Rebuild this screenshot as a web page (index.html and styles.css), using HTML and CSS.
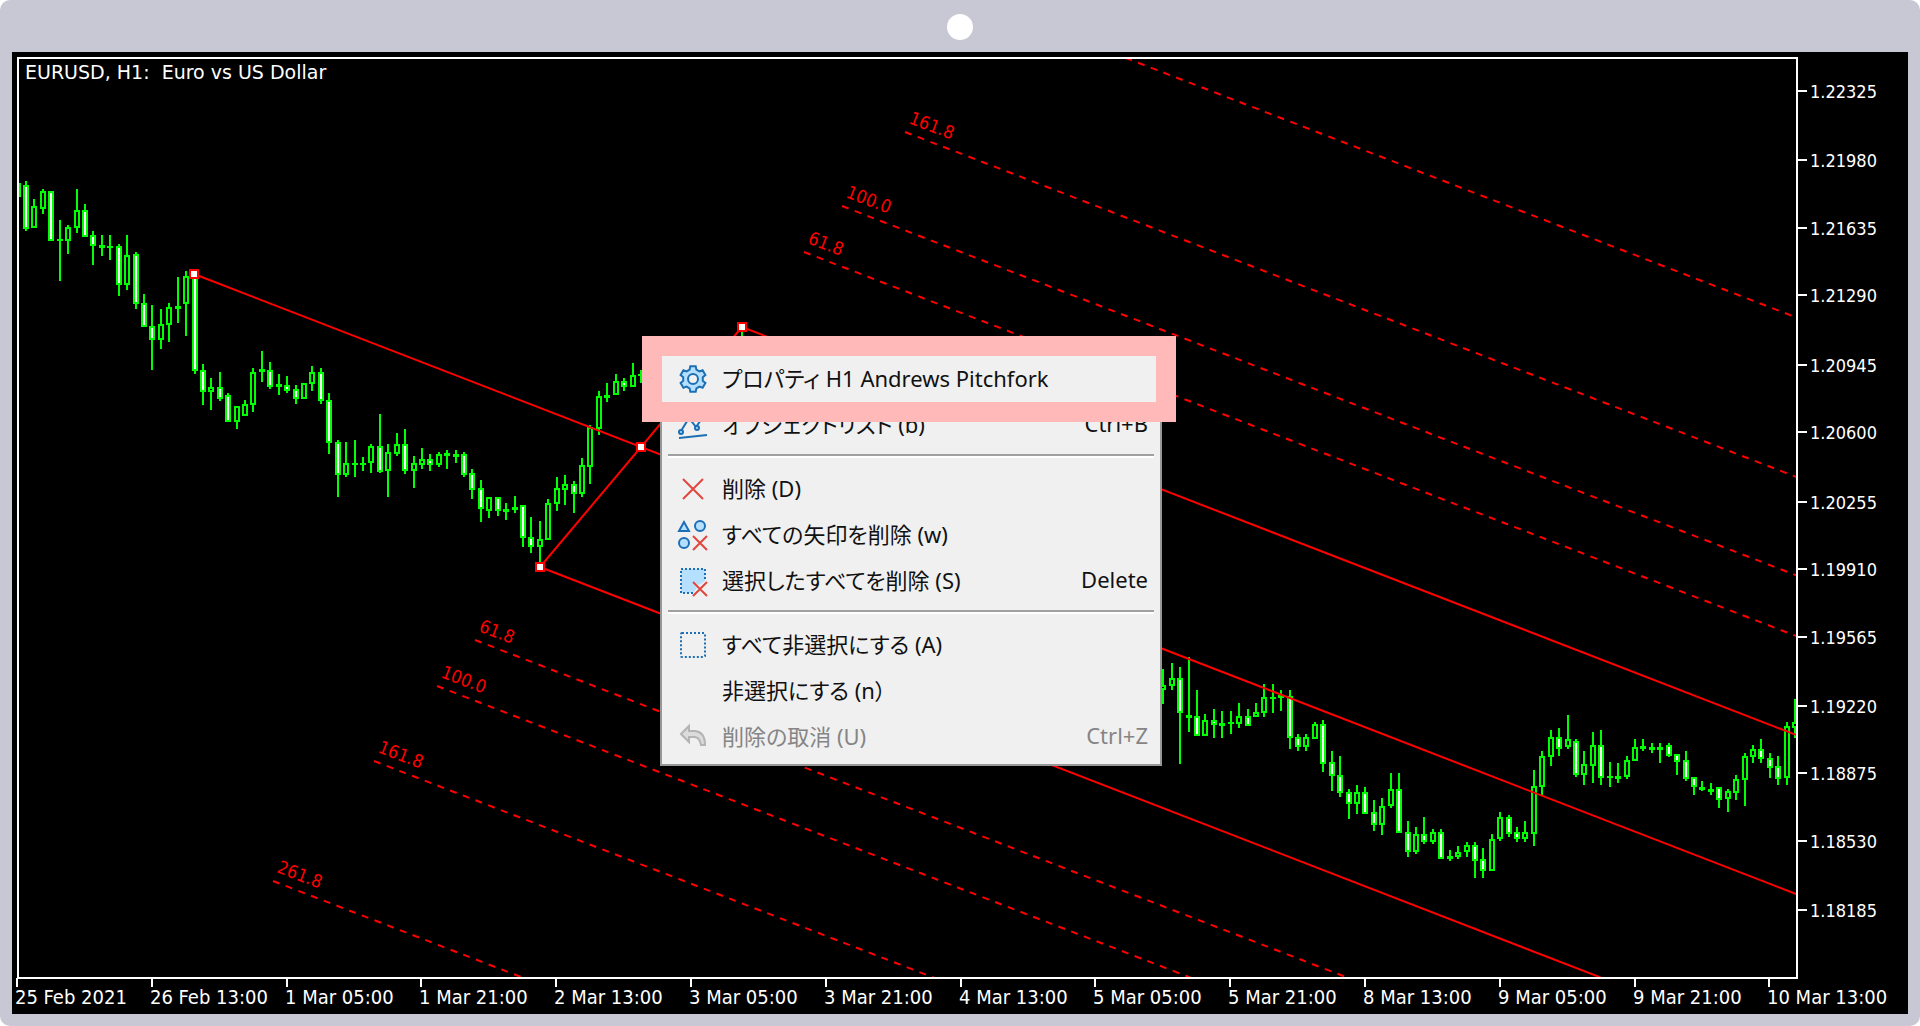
FILE: index.html
```
<!DOCTYPE html>
<html lang="ja">
<head>
<meta charset="utf-8">
<meta name="viewport" content="width=device-width, initial-scale=1">
<title>EURUSD, H1</title>
<link rel="stylesheet" href="styles.css">
</head>
<body>
<main class="device">
  <header class="device-bar"><span class="camera"></span></header>
  <section class="screen">
    <svg class="chart" viewBox="12 52 1896 962" role="img" aria-label="EURUSD, H1: Euro vs US Dollar">
      <defs>
        <clipPath id="plot"><rect x="18" y="58" width="1779" height="919"/></clipPath>
      </defs>
      <g clip-path="url(#plot)">
        <path id="wicks" class="candle"/>
        <path id="hollow" class="candle candle-up"/>
        <path id="filled" class="candle candle-down"/>
        <g id="solid" class="pitch"></g>
        <g id="dashed" class="pitch pitch-level"></g>
        <g id="levels" class="level-label"></g>
        <g id="handles" class="handle"></g>
      </g>
      <rect class="frame" x="18" y="58" width="1779" height="920"/>
      <path id="ticks" class="frame"/>
      <text class="chart-title" x="25" y="79" xml:space="preserve">EURUSD, H1:  Euro vs US Dollar</text>
      <g id="prices" class="price-label"></g>
      <g id="times" class="time-label"></g>
    </svg>

    <ul class="menu" role="menu">
      <li class="marked"><button class="item" type="button" role="menuitem">
        <svg class="icon blue" viewBox="0 0 30 30"><path class="tint" d="M11.6 5.6L12.3 2.3H17.7L18.4 5.6L21.4 7.4L24.6 6.3L27.4 11L24.8 13.2V16.8L27.4 19L24.6 23.7L21.4 22.6L18.4 24.4L17.7 27.7H12.3L11.6 24.4L8.6 22.6L5.4 23.7L2.6 19L5.2 16.8V13.2L2.6 11L5.4 6.3L8.6 7.4Z"/><circle class="hole" cx="15" cy="15" r="5"/></svg>
        <span>プロパティ H1 Andrews Pitchfork</span></button></li>
      <li><button class="item" type="button" role="menuitem">
        <svg class="icon blue" viewBox="0 0 30 30"><path d="M3 21L11 8L18 17L27 4M1 28L29 25"/><circle class="tint" cx="3" cy="22" r="2"/><circle class="tint" cx="11" cy="8" r="2"/><circle class="tint" cx="19" cy="18" r="2"/></svg>
        <span>オブジェクトリスト (b)</span><kbd>Ctrl+B</kbd></button></li>
      <li class="separator" role="separator"></li>
      <li><button class="item" type="button" role="menuitem">
        <svg class="icon red" viewBox="0 0 30 30"><path d="M5 5L25 25M25 5L5 25"/></svg>
        <span>削除 (D)</span></button></li>
      <li><button class="item" type="button" role="menuitem">
        <svg class="icon blue" viewBox="0 0 30 30"><path class="tint" d="M6 2L1 11H11Z"/><circle class="tint" cx="22" cy="6" r="5"/><circle class="tint" cx="6" cy="23" r="5"/><path class="red" d="M15 16L29 30M29 16L15 30"/></svg>
        <span>すべての矢印を削除 (w)</span></button></li>
      <li><button class="item" type="button" role="menuitem">
        <svg class="icon blue" viewBox="0 0 30 30"><path class="fill" d="M3 3H27V15L21 19L14 16L19 22L15 27H3Z"/><path class="dots" d="M15 27H3V3H27V15"/><path class="red" d="M15 16L29 30M29 16L15 30"/></svg>
        <span>選択したすべてを削除 (S)</span><kbd>Delete</kbd></button></li>
      <li class="separator" role="separator"></li>
      <li><button class="item" type="button" role="menuitem">
        <svg class="icon blue" viewBox="0 0 30 30"><rect class="dots" x="3" y="3" width="24" height="24" rx="1"/></svg>
        <span>すべて非選択にする (A)</span></button></li>
      <li><button class="item" type="button" role="menuitem">
        <svg class="icon" viewBox="0 0 30 30"></svg>
        <span>非選択にする (n）</span></button></li>
      <li><button class="item" type="button" role="menuitem" disabled>
        <svg class="icon gray" viewBox="0 0 30 30"><path d="M3 12L11 4V9H17Q27 10 27 23H23Q22 16 17 15H11V20Z"/></svg>
        <span>削除の取消 (U)</span><kbd>Ctrl+Z</kbd></button></li>
    </ul>
  </section>
</main>
<script src="chart.js"></script>
</body>
</html>
```
FILE: styles.css
```
* { box-sizing: border-box; }

body {
  margin: 0;
  background: #fff;
  font-family: "Noto Sans", "Noto Sans CJK JP", sans-serif;
}

.device {
  padding: 0 12px 12px;
  border-radius: 10px;
  background: #c8c7d4;
}

.device-bar {
  display: flex;
  align-items: center;
  justify-content: center;
  height: 52px;
  padding-top: 2px;
}

.camera {
  width: 26px;
  height: 26px;
  border-radius: 50%;
  background: #fff;
}

.screen {
  position: relative;
  background: #000;
}

.chart { display: block; width: 100%; height: auto; }

.candle { fill: none; stroke: #0f0; stroke-width: 2; }
.candle-up { fill: #000; }
.candle-down { fill: #fff; }
.pitch { fill: none; stroke: #f00; stroke-width: 2; }
.pitch-level { stroke-dasharray: 7 6.6; }
.handle { fill: #fff; stroke: #f00; stroke-width: 2; }
.frame { fill: none; stroke: #fff; stroke-width: 2; }

.chart-title, .price-label, .time-label, .level-label {
  font-family: "DejaVu Sans Condensed", "DejaVu Sans", sans-serif;
  font-stretch: condensed;
  font-size: 18px;
  fill: #fff;
}
.chart-title {
  font-family: "DejaVu Sans", sans-serif;
  font-stretch: normal;
  font-size: 19px;
}
.time-label { font-size: 20px; }
.level-label { fill: #f00; }

.menu {
  position: absolute;
  left: 648px;
  top: 298px;
  width: 502px;
  margin: 0;
  padding: 4px 0;
  border: 2px solid #979797;
  background: #f0f0f0;
  list-style: none;
}

.item {
  display: flex;
  align-items: center;
  gap: 14px;
  width: 100%;
  height: 46px;
  padding: 0 12px 0 16px;
  border: 0;
  background: none;
  color: #111;
  font: inherit;
  font-size: 22px;
  font-feature-settings: "palt";
  text-align: left;
  white-space: nowrap;
}
.item:disabled { color: #858585; }
.item span, .item kbd { padding-bottom: 4px; }
.item kbd { margin-left: auto; font: inherit; }

.marked { position: relative; }
.marked::after {
  content: "";
  position: absolute;
  inset: -20px -16px -20px -20px;
  border: 20px solid #ffb9b9;
  pointer-events: none;
}

.separator {
  height: 4px;
  margin: 6px 6px 8px;
  border-top: 2px solid #a0a0a0;
  border-bottom: 2px solid #fff;
}

.icon {
  flex: none;
  width: 30px;
  height: 30px;
  overflow: visible;
  fill: none;
  stroke-width: 2;
}
.blue { stroke: #1c6fb4; }
.red { stroke: #e0473f; }
.gray { stroke: #b4b4b4; fill: #dcdcdc; }
.tint { fill: #b5dfff; }
.hole { fill: #f0f0f0; }
.fill { fill: #b5e0ff; stroke: none; }
.dots { stroke-dasharray: 2 2; }
```
FILE: chart.js
```
// Candles as [high, top, bottom, low, kind]; kind u = hollow, d = filled.
const early = `183 183 197 197 u|181 185 229 231 d|199 206 228 228 u|189 191 209 214 u|191 191 241 241 d|220 240 240 281 u|225 227 241 254 u|189 210 228 233 u|204 210 237 237 d|231 235 246 265 d|235 244 247 256 u|235 247 247 260 u|244 246 285 296 d|235 255 285 290 u|252 254 304 309 d|294 303 327 327 d|305 326 340 370 d|309 324 340 349 u|303 307 325 342 u|277 305 309 323 u|271 276 304 336 u|274 276 371 374 d|364 370 392 405 d|378 387 392 410 u|372 387 399 401 d|393 395 422 422 d|406 406 422 429 u|400 404 416 416 u|368 372 405 412 u|351 368 372 382 u|362 370 387 389 d|374 383 387 395 u|376 385 391 393 d|385 389 399 404 d|383 383 399 399 u|366 372 384 391 u|368 372 401 404 d|393 400 443 454 d|440 442 475 497 d|442 463 475 477 u|440 464 464 477 u|457 464 464 471 u|444 446 463 473 u|414 446 472 473 d|444 452 471 497 u|433 444 454 456 u|429 444 471 474 d|456 463 471 488 u|448 459 465 469 u|454 459 465 471 d|452 454 465 467 u|450 452 456 469 u|450 453 456 463 u|452 454 475 477 d|469 473 490 499 d|480 488 509 522 d|497 497 511 518 u|497 497 511 516 d|503 508 511 520 u|496 506 509 513 u|505 505 538 547 d|517 537 547 553 d|521 539 547 563 u|499 503 540 540 u|477 488 504 511 u|475 484 490 505 u|481 484 494 513 d|458 465 494 497 u|425 427 467 484 u|391 396 429 435 u|383 394 398 402 u|374 381 395 395 u|378 381 387 391 d|363 375 387 387 u|370 375 375 383 u`;
const late = `669 685 690 704 u|663 678 686 690 u|667 678 713 764 d|657 714 717 732 u|690 716 736 736 d|714 720 736 736 u|709 720 725 738 d|711 722 726 738 u|711 723 723 734 u|703 716 724 728 u|709 716 726 726 d|703 712 717 717 u|684 697 713 717 u|684 698 698 713 u|690 694 698 711 u|690 696 738 749 d|734 737 747 751 d|734 737 747 751 u|722 724 739 739 u|720 724 764 772 d|751 762 776 791 d|756 775 793 797 d|789 792 804 819 d|785 792 804 814 u|787 792 814 814 d|800 812 825 831 d|798 806 825 835 u|773 789 806 808 u|773 789 833 833 d|821 832 852 857 d|827 834 852 854 u|817 834 842 844 d|829 832 842 844 u|829 832 859 859 d|850 855 858 861 u|846 852 857 859 u|842 845 852 857 u|842 845 861 878 d|848 859 871 878 d|834 839 871 871 u|812 817 839 841 u|815 817 834 837 d|827 832 839 842 d|821 832 839 842 u|770 786 834 846 u|751 756 787 795 u|730 737 757 766 u|728 737 749 756 d|715 739 747 749 u|739 741 775 777 d|751 764 775 785 u|732 745 766 783 u|730 745 778 785 d|762 777 777 787 u|763 776 778 783 u|756 760 777 779 u|739 747 761 761 u|739 745 749 751 u|743 746 749 753 u|743 746 749 763 u|743 745 756 757 d|754 754 762 775 d|751 760 779 781 d|777 777 787 795 d|781 786 789 791 u|783 788 791 795 u|787 787 800 808 d|789 791 799 812 u|775 779 793 800 u|753 756 780 806 u|745 749 757 763 u|739 749 759 763 d|753 758 768 778 d|756 766 779 785 d|722 726 778 785 u|699 722 728 738 u`;

const byId = (id) => document.getElementById(id);
let wicks = "", hollow = "", filled = "";

function addCandles(text, first) {
  text.split("|").forEach((row, n) => {
    const [high, top, bottom, low, kind] = row.split(" ");
    const x = Math.round(17.6 + 8.424 * (first + n));
    wicks += `M${x} ${high}V${low}`;
    if (+bottom - +top < 5) {
      // A body too small to have an inside is one bar across the wick.
      const y = Math.round((+top + +bottom) / 2);
      wicks += `M${x - 3} ${y}H${x + 3}`;
      if (bottom !== top) wicks += `M${x - 3} ${y + 1}H${x + 3}`;
    } else {
      const box = `M${x - 2} ${+top + 1}H${x + 2}V${+bottom - 1}H${x - 2}Z`;
      if (kind === "u") hollow += box; else filled += box;
    }
  });
}
addCandles(early, 0);
addCandles("327 327 327 345 u", 86);
addCandles(late, 136);
byId("wicks").setAttribute("d", wicks);
byId("hollow").setAttribute("d", hollow);
byId("filled").setAttribute("d", filled);

// Pitchfork: three parallel lines, and the dashed levels on each side.
const slope = 0.387;
const ray = (x, y) => `<path d="M${x} ${y}L1800 ${y + slope * (1800 - x)}"/>`;
byId("solid").innerHTML =
  ray(194, 274) + ray(742, 327) + ray(540, 567) + '<path d="M540 567L742 327"/>';
const levels = [
  [1100, 48, ""], [905, 132, "161.8"], [842, 206, "100.0"], [804, 252, "61.8"],
  [475, 640, "61.8"], [437, 686, "100.0"], [374, 761, "161.8"], [273, 881, "261.8"],
];
byId("dashed").innerHTML = levels.map(([x, y]) => ray(x, y)).join("");
byId("levels").innerHTML = levels.filter((l) => l[2]).map(([x, y, t]) =>
  `<text transform="translate(${x + 3} ${y - 9}) rotate(21)">${t}</text>`).join("");
byId("handles").innerHTML = [[194, 274], [742, 327], [540, 567], [641, 447]].map(([x, y]) =>
  `<rect x="${x - 4}" y="${y - 4}" width="8" height="8"/>`).join("");

// Axes
const prices = [[91, "1.22325"], [160, "1.21980"], [228, "1.21635"], [295, "1.21290"],
  [365, "1.20945"], [432, "1.20600"], [502, "1.20255"], [569, "1.19910"], [637, "1.19565"],
  [706, "1.19220"], [773, "1.18875"], [841, "1.18530"], [910, "1.18185"]];
const times = ["25 Feb 2021", "26 Feb 13:00", "1 Mar 05:00", "1 Mar 21:00", "2 Mar 13:00",
  "3 Mar 05:00", "3 Mar 21:00", "4 Mar 13:00", "5 Mar 05:00", "5 Mar 21:00", "8 Mar 13:00",
  "9 Mar 05:00", "9 Mar 21:00", "10 Mar 13:00"];
let ticks = "";
byId("prices").innerHTML = prices.map(([y, t]) => {
  ticks += `M1798 ${y}H1807`;
  return `<text x="1810" y="${y + 7}">${t}</text>`;
}).join("");
byId("times").innerHTML = times.map((t, n) => {
  const x = Math.round(17 + 134.8 * n);
  ticks += `M${x} 978V987`;
  return `<text x="${x - 2}" y="1004">${t}</text>`;
}).join("");
byId("ticks").setAttribute("d", ticks);
```
